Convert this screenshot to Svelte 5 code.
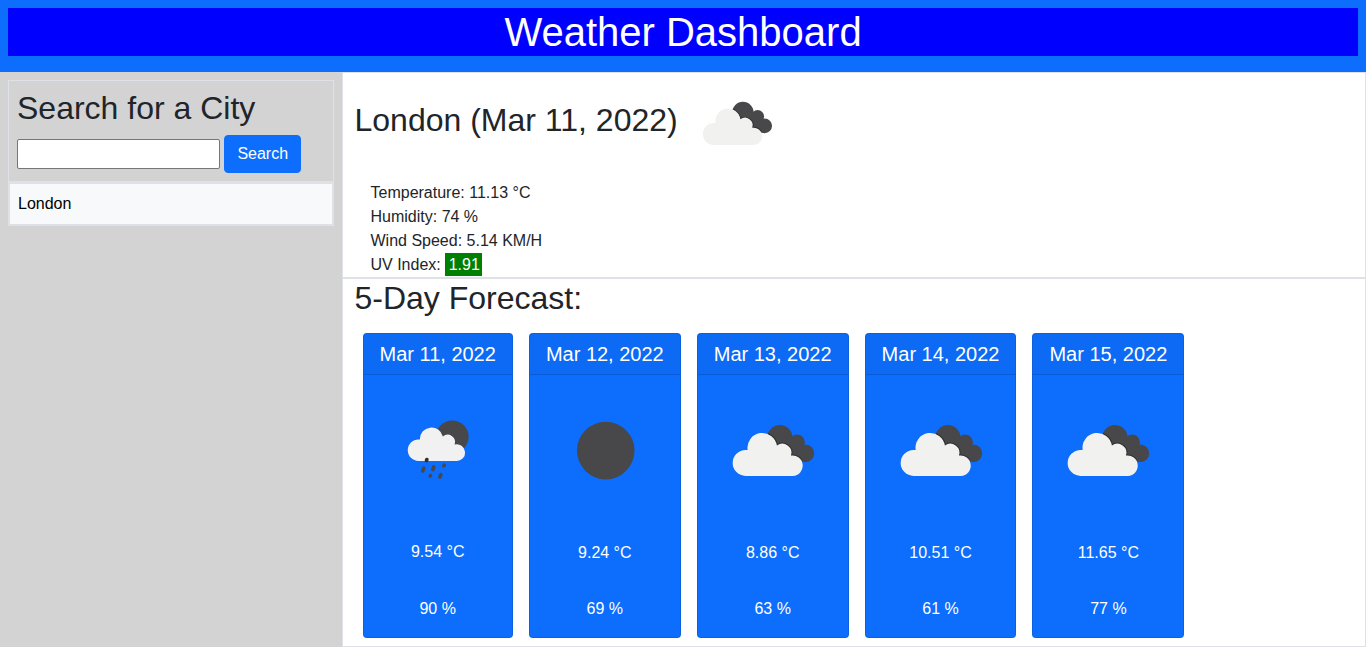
<script>
  const forecast = [
    { date: 'Mar 11, 2022', icon: 'rain', temp: '9.54', humidity: 90 },
    { date: 'Mar 12, 2022', icon: 'clear', temp: '9.24', humidity: 69 },
    { date: 'Mar 13, 2022', icon: 'clouds', temp: '8.86', humidity: 63 },
    { date: 'Mar 14, 2022', icon: 'clouds', temp: '10.51', humidity: 61 },
    { date: 'Mar 15, 2022', icon: 'clouds', temp: '11.65', humidity: 77 }
  ];
  const boxes = { rain: '-45 -42 348 348', clear: '-42 -42 354 354', clouds: '-18 -42 354 354' };
  const cloud =
    'M77 213A39 39 0 0 1 77 135H83A44.4 44.4 0 1 1 171 122A27 27 0 0 1 213 152A30.7 30.7 0 1 1 219 213Z';
</script>

{#snippet weatherIcon(kind)}
  <svg class="icon" viewBox={boxes[kind]} aria-hidden="true">
    {#if kind === 'clouds'}
      <g fill="#48484a">
        <circle cx="180" cy="98" r="38" />
        <circle cx="232" cy="112" r="23" />
        <circle cx="257" cy="145" r="26" />
        <path d="M150 110L210 92L246 126L257 171L220 160Z" />
      </g>
      <path d={cloud} fill="none" stroke="#303032" stroke-width="6" clip-path="url(#shade)" />
      <path d={cloud} fill="#f1f1f0" />
    {:else if kind === 'clear'}
      <circle cx="137.500" cy="137" r="86.500" fill="#48484a" />
    {:else}
      <circle cx="171" cy="95" r="49" fill="#48484a" />
      <path
        d="M70 167A32 32 0 0 1 70 103H74A35 35 0 0 1 143 94A22 22 0 0 1 178 118A25 25 0 1 1 182 167Z"
        fill="#f1f1f2" />
      <g stroke="#48484a" stroke-width="11" stroke-linecap="round">
        <path d="M95 163L94 166" stroke="#303032" />
        <path d="M86 189L83 197" />
        <path d="M116 185L113 193" />
        <path d="M147 180L146 182" />
        <path d="M106 211L105 212" />
        <path d="M137 208L134 215" />
      </g>
    {/if}
  </svg>
{/snippet}

<svg class="defs" width="0" height="0" aria-hidden="true">
  <clipPath id="shade">
    <circle cx="180" cy="98" r="38" />
    <circle cx="232" cy="112" r="23" />
    <circle cx="257" cy="145" r="26" />
    <path d="M150 110L210 92L246 126L257 171L220 160Z" />
  </clipPath>
</svg>

<div class="page">
  <header><h1>Weather Dashboard</h1></header>
  <div class="columns">
    <aside>
      <div class="search">
        <h2>Search for a City</h2>
        <div class="controls">
          <input type="text" aria-label="City" />
          <button type="button">Search</button>
        </div>
      </div>
      <div class="history">London</div>
    </aside>
    <main>
      <section class="current">
        <h2><span>London (Mar 11, 2022)</span>{@render weatherIcon('clouds')}</h2>
        <div class="details">
          <div>Temperature: 11.13 °C</div>
          <div>Humidity: 74 %</div>
          <div>Wind Speed: 5.14 KM/H</div>
          <div>UV Index: <span class="uv">1.91</span></div>
        </div>
      </section>
      <section class="forecast">
        <h2>5-Day Forecast:</h2>
        <div class="cards">
          {#each forecast as day}
            <article>
              <h5>{day.date}</h5>
              <div class="body">
                {@render weatherIcon(day.icon)}
                <p>{day.temp} °C</p>
                <p>{day.humidity} %</p>
              </div>
            </article>
          {/each}
        </div>
      </section>
    </main>
  </div>
</div>

<style>
  :global(body) { margin: 0; }
  .page, .page * { box-sizing: border-box; }
  .page {
    height: 647px;
    display: flex;
    flex-direction: column;
    overflow: hidden;
    background: #fff;
    color: #212529;
    font: 16px/24px "Liberation Sans", Arial, sans-serif;
  }
  .defs { position: absolute; }
  h1, h2, h5, p { margin: 0; font-weight: 400; }
  header { height: 72px; padding: 8px; background: #0d6efd; }
  h1 { background: #00f; color: #fff; font-size: 40px; line-height: 48px; text-align: center; }
  h2 { font-size: 32px; line-height: 38.4px; }
  .columns { flex: 1; display: flex; }
  aside { width: 341.5px; padding: 8px; background: #d3d3d3; }
  .search { border: 1px solid #dee2e6; padding: 8px; }
  .controls { display: flex; align-items: center; gap: 4.4px; margin-top: 8px; }
  input {
    width: 203px;
    height: 30px;
    border: 1px solid #767676;
    border-radius: 2px;
    background: #fff;
    font: inherit;
  }
  button {
    height: 38px;
    padding: 6px 12px;
    border: 1px solid #0d6efd;
    border-radius: 4px;
    background: #0d6efd;
    color: #fff;
    font: inherit;
  }
  .history { border: 2px solid #dee2e6; padding: 8px; background: #f8f9fa; color: #000; }
  main { flex: 1; display: flex; flex-direction: column; }
  section { border: 1px solid #dee2e6; padding: 0 12px; }
  .current { height: 206px; }
  .current h2 { display: flex; align-items: center; gap: 8.9px; height: 101px; }
  .current h2 span { margin-top: -6px; }
  .current .icon { width: 100px; height: 100px; flex: none; }
  .details { padding: 7px 16px 0; }
  .uv { background: green; color: #fff; padding: 3px 2.5px 3px 3.5px; }
  .forecast { flex: 1; }
  .cards { display: flex; gap: 16px; padding: 8px; margin-top: 8px; }
  article {
    flex: none;
    height: 305px;
    border: 1px solid rgba(0, 0, 0, 0.125);
    border-radius: 4px;
    background: #0d6efd;
    color: #fff;
    text-align: center;
    overflow: hidden;
  }
  h5 {
    padding: 8px 16px;
    border-bottom: 1px solid rgba(0, 0, 0, 0.125);
    background: rgba(0, 0, 0, 0.03);
    font-size: 20px;
    line-height: 24px;
    white-space: nowrap;
  }
  .body {
    height: 262px;
    padding: 16px;
    display: flex;
    flex-direction: column;
    justify-content: space-between;
  }
  .body .icon { display: block; width: 0; min-width: 100%; aspect-ratio: 1; }
</style>
